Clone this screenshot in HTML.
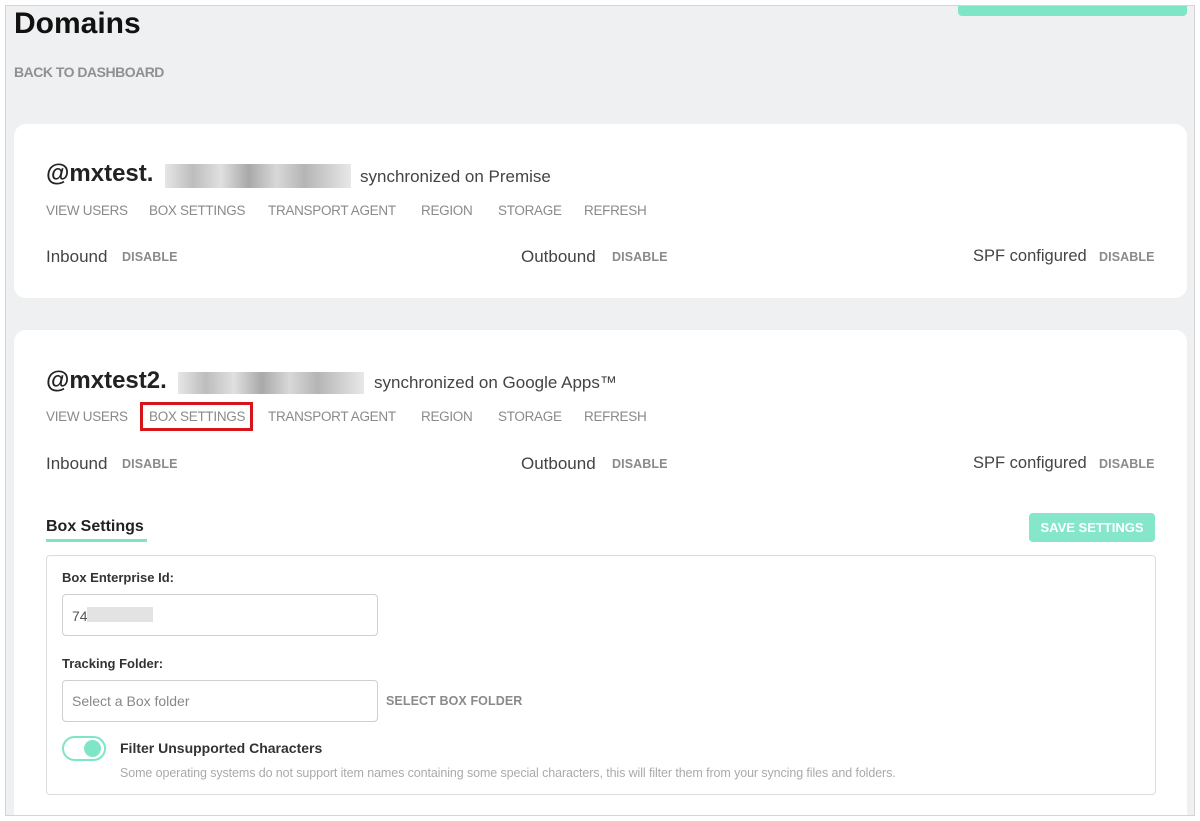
<!DOCTYPE html>
<html><head><style>
*{margin:0;padding:0;box-sizing:border-box}
body{width:1200px;height:821px;background:#fff;position:relative;overflow:hidden;font-family:"Liberation Sans",sans-serif}
.frame{position:absolute;left:5px;top:5px;width:1190px;height:811px;background:#eff0f1;border:1px solid #d4d4d4;overflow:hidden}
.abs{position:absolute;white-space:nowrap}
.card{position:absolute;left:8px;width:1173px;background:#fff;border-radius:12px}
.nav{font-size:13.5px;color:#8a8a8a;letter-spacing:-0.3px}
.lbl{font-size:17px;color:#444}
.dis{font-size:12.5px;color:#8a8a8a;font-weight:bold;letter-spacing:0.1px}
.blur{background:linear-gradient(90deg,#e6e6e6,#bdbdbd 15%,#e0e0e0 30%,#a9a9a9 45%,#d8d8d8 60%,#b5b5b5 75%,#e8e8e8)}
.input{position:absolute;border:1px solid #cfcfcf;border-radius:4px;background:#fff}
</style></head><body>
<div class="frame">
 <div class="abs" style="left:952px;top:-2px;width:229px;height:12px;background:#7ee6c7;border-radius:0 0 4px 4px"></div>
 <div class="abs" style="left:8px;top:1px;font-size:30px;font-weight:bold;color:#111">Domains</div>
 <div class="abs nav" style="left:8px;top:58px;font-size:14px;font-weight:bold;letter-spacing:-0.5px;color:#909090">BACK TO DASHBOARD</div>

 <div class="card" style="top:118px;height:174px">
  <div class="abs" style="left:32px;top:36px;font-size:24px;font-weight:bold;color:#222">@mxtest.</div>
  <div class="abs blur" style="left:151px;top:40px;width:186px;height:24px"></div>
  <div class="abs" style="left:346px;top:43px;font-size:17px;color:#444">synchronized on Premise</div>
  <div class="abs nav" style="left:32px;top:79px">VIEW USERS</div>
  <div class="abs nav" style="left:135px;top:79px">BOX SETTINGS</div>
  <div class="abs nav" style="left:254px;top:79px">TRANSPORT AGENT</div>
  <div class="abs nav" style="left:407px;top:79px">REGION</div>
  <div class="abs nav" style="left:484px;top:79px">STORAGE</div>
  <div class="abs nav" style="left:570px;top:79px">REFRESH</div>
  <div class="abs lbl" style="left:32px;top:123px">Inbound</div>
  <div class="abs dis" style="left:108px;top:126px">DISABLE</div>
  <div class="abs lbl" style="left:507px;top:123px">Outbound</div>
  <div class="abs dis" style="left:598px;top:126px">DISABLE</div>
  <div class="abs lbl" style="left:959px;top:123px;font-size:16.5px">SPF configured</div>
  <div class="abs dis" style="left:1085px;top:126px">DISABLE</div>
 </div>

 <div class="card" style="top:324px;height:500px">
  <div class="abs" style="left:32px;top:37px;font-size:24px;font-weight:bold;color:#222">@mxtest2.</div>
  <div class="abs blur" style="left:164px;top:42px;width:186px;height:22px"></div>
  <div class="abs" style="left:360px;top:43px;font-size:17px;color:#444">synchronized on Google Apps™</div>
  <div class="abs nav" style="left:32px;top:79px">VIEW USERS</div>
  <div class="abs" style="left:126px;top:72px;width:113px;height:29px;border:3px solid #d8141b"></div>
  <div class="abs nav" style="left:135px;top:79px">BOX SETTINGS</div>
  <div class="abs nav" style="left:254px;top:79px">TRANSPORT AGENT</div>
  <div class="abs nav" style="left:407px;top:79px">REGION</div>
  <div class="abs nav" style="left:484px;top:79px">STORAGE</div>
  <div class="abs nav" style="left:570px;top:79px">REFRESH</div>
  <div class="abs lbl" style="left:32px;top:124px">Inbound</div>
  <div class="abs dis" style="left:108px;top:127px">DISABLE</div>
  <div class="abs lbl" style="left:507px;top:124px">Outbound</div>
  <div class="abs dis" style="left:598px;top:127px">DISABLE</div>
  <div class="abs lbl" style="left:959px;top:124px;font-size:16.5px">SPF configured</div>
  <div class="abs dis" style="left:1085px;top:127px">DISABLE</div>

  <div class="abs" style="left:32px;top:188px;font-size:16px;font-weight:bold;color:#222">Box Settings</div>
  <div class="abs" style="left:32px;top:209px;width:101px;height:3px;background:#7ee6c7"></div>
  <div class="abs" style="left:1015px;top:183px;width:126px;height:29px;background:#86e6c9;border-radius:4px;color:#fff;font-size:13px;font-weight:bold;text-align:center;line-height:29px">SAVE SETTINGS</div>

  <div class="abs" style="left:32px;top:225px;width:1110px;height:240px;border:1px solid #dcdcdc;border-radius:4px;background:#fff">
   <div class="abs" style="left:15px;top:14px;font-size:13px;font-weight:bold;color:#333">Box Enterprise Id:</div>
   <div class="input" style="left:15px;top:38px;width:316px;height:42px">
    <div class="abs" style="left:9px;top:13px;font-size:14px;color:#555">74</div>
    <div class="abs" style="left:24px;top:12px;width:66px;height:15px;background:#e3e3e3"></div>
   </div>
   <div class="abs" style="left:15px;top:100px;font-size:13px;font-weight:bold;color:#333">Tracking Folder:</div>
   <div class="input" style="left:15px;top:124px;width:316px;height:42px">
    <div class="abs" style="left:9px;top:12px;font-size:14px;color:#888">Select a Box folder</div>
   </div>
   <div class="abs dis" style="left:339px;top:138px">SELECT BOX FOLDER</div>
   <div class="abs" style="left:15px;top:180px;width:44px;height:25px;border:2px solid #7ee6c7;border-radius:13px"></div>
   <div class="abs" style="left:37px;top:184px;width:17px;height:17px;background:#7ee6c7;border-radius:50%"></div>
   <div class="abs" style="left:73px;top:184px;font-size:14px;font-weight:bold;color:#333">Filter Unsupported Characters</div>
   <div class="abs" style="left:73px;top:210px;font-size:12.5px;color:#aaa;letter-spacing:-0.1px">Some operating systems do not support item names containing some special characters, this will filter them from your syncing files and folders.</div>
  </div>
 </div>
</div>
</body></html>
